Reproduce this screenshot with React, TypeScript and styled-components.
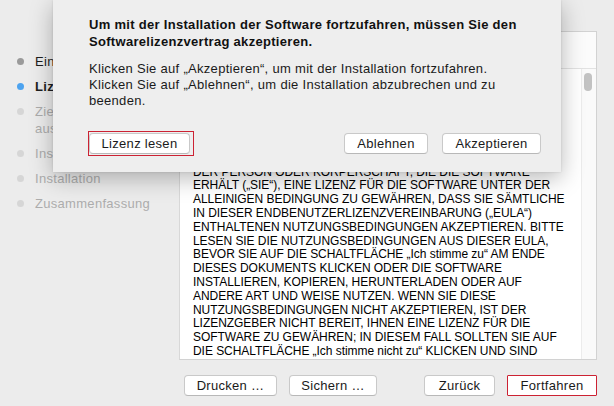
import React from "react";
import styled, { createGlobalStyle } from "styled-components";

const Global = createGlobalStyle`
  html, body { margin: 0; padding: 0; background: #ececec; }
  body { font-family: "Liberation Sans", Arial, sans-serif; }
`;

const Window = styled.div`
  position: relative;
  width: 614px;
  height: 406px;
  overflow: hidden;
  background: #ececec;
  display: grid;
  grid-template-columns: 179px 1fr;
`;

const Sidebar = styled.ul`
  list-style: none;
  margin: 0;
  padding: 53px 0 0 17px;
  display: flex;
  flex-direction: column;
  gap: 8px;
`;

const Step = styled.li<{ $state: "done" | "current" | "todo" }>`
  display: grid;
  grid-template-columns: 18px 1fr;
  align-items: start;
  font-size: 13px;
  letter-spacing: 0.3px;
  line-height: 17px;
  font-weight: ${(p) => (p.$state === "current" ? 700 : 400)};
  color: ${(p) => (p.$state === "todo" ? "#acacac" : "#1d1d1d")};
  &::before {
    content: "";
    width: 7px;
    height: 7px;
    border-radius: 50%;
    margin-top: 5px;
    background: ${(p) =>
      p.$state === "current" ? "#4da3ef" : p.$state === "done" ? "#9a9a9a" : "#d6d6d6"};
  }
`;

const Main = styled.div`
  padding: 31px 17px 0 0;
  display: flex;
  flex-direction: column;
`;

const Panel = styled.div`
  height: 329px;
  background: #fff;
  border: 1px solid #d2d2d2;
  border-left-color: #d8d8d8;
  box-sizing: border-box;
  display: flex;
  flex-direction: column;
`;

const PanelHeader = styled.div`
  height: 36px;
  flex: none;
  background: #fbfbfb;
  border-bottom: 1px solid #e2e2e2;
`;

const PanelBody = styled.div`
  flex: 1;
  display: grid;
  grid-template-columns: 1fr 15px;
  overflow: hidden;
`;

const LicenseText = styled.div`
  padding: 0 0 0 13px;
  font-size: 12px;
  letter-spacing: -0.05px;
  line-height: 13.8px;
  color: #000;
  white-space: nowrap;
  overflow: hidden;
`;

const ScrollTrack = styled.div`
  background: #fafafa;
  border-left: 1px solid #ececec;
  padding: 4px 0 0 2px;
`;

const ScrollThumb = styled.div`
  width: 8px;
  height: 18px;
  border-radius: 4px;
  background: #c2c2c2;
`;

const ButtonRow = styled.div`
  display: flex;
  align-items: center;
  padding: 15px 0 0 5px;
  gap: 12px;
`;

const Spacer = styled.div`
  flex: 1;
`;

const Button = styled.button<{ $w: number; $highlight?: boolean }>`
  width: ${(p) => p.$w}px;
  height: 21px;
  padding: 0;
  box-sizing: border-box;
  background: #fff;
  border: 1px solid ${(p) => (p.$highlight ? "#cc2233" : "#c9c9c9")};
  border-bottom-color: ${(p) => (p.$highlight ? "#cc2233" : "#b8b8b8")};
  border-radius: ${(p) => (p.$highlight ? "1px" : "4px")};
  font-family: "Liberation Sans", Arial, sans-serif;
  font-size: 13px;
  letter-spacing: 0.3px;
  color: #1a1a1a;
  line-height: 19px;
`;

const Sheet = styled.div`
  position: absolute;
  left: 53px;
  top: 0;
  width: 508px;
  height: 172px;
  box-sizing: border-box;
  background: #eeeeee;
  box-shadow: 0 6px 22px rgba(0, 0, 0, 0.28), 0 0 2px rgba(0, 0, 0, 0.12);
  padding: 16px 20px 0 36px;
  display: flex;
  flex-direction: column;
  letter-spacing: 0.3px;
`;

const SheetTitle = styled.div`
  font-weight: 700;
  font-size: 13px;
  line-height: 17px;
  color: #111;
`;

const SheetBody = styled.div`
  margin-top: 11px;
  font-size: 13px;
  line-height: 16px;
  color: #1a1a1a;
`;

const SheetButtons = styled.div`
  margin-top: auto;
  margin-bottom: 17px;
  display: flex;
  align-items: center;
  gap: 14px;
`;

const Highlight = styled.div`
  border: 1.5px solid #cc2233;
  padding: 1px 3px 1px 0;
  margin: -1px 0 -1px -1px;
  line-height: 0;
`;

const hidden = [
  "WICHTIG – BITTE SORGFÄLTIG LESEN: DIESE",
  "ENDBENUTZERLIZENZVEREINBARUNG IST EIN",
  "RECHTLICH BINDENDER VERTRAG ZWISCHEN IHNEN",
  "(ALS NATÜRLICHE ODER JURISTISCHE PERSON)",
  "UND DEM LIZENZGEBER. DIE SOFTWARE WIRD",
  "NUR LIZENZIERT UND NICHT VERKAUFT. DER",
  "LIZENZGEBER IST NUR DANN BEREIT, DER",
];

const visible = [
  "DER PERSON ODER KÖRPERSCHAFT, DIE DIE SOFTWARE",
  "ERHÄLT („SIE“), EINE LIZENZ FÜR DIE SOFTWARE UNTER DER",
  "ALLEINIGEN BEDINGUNG ZU GEWÄHREN, DASS SIE SÄMTLICHE",
  "IN DIESER ENDBENUTZERLIZENZVEREINBARUNG („EULA“)",
  "ENTHALTENEN NUTZUNGSBEDINGUNGEN AKZEPTIEREN. BITTE",
  "LESEN SIE DIE NUTZUNGSBEDINGUNGEN AUS DIESER EULA,",
  "BEVOR SIE AUF DIE SCHALTFLÄCHE „Ich stimme zu“ AM ENDE",
  "DIESES DOKUMENTS KLICKEN ODER DIE SOFTWARE",
  "INSTALLIEREN, KOPIEREN, HERUNTERLADEN ODER AUF",
  "ANDERE ART UND WEISE NUTZEN. WENN SIE DIESE",
  "NUTZUNGSBEDINGUNGEN NICHT AKZEPTIEREN, IST DER",
  "LIZENZGEBER NICHT BEREIT, IHNEN EINE LIZENZ FÜR DIE",
  "SOFTWARE ZU GEWÄHREN; IN DIESEM FALL SOLLTEN SIE AUF",
  "DIE SCHALTFLÄCHE „Ich stimme nicht zu“ KLICKEN UND SIND",
];

export default function App() {
  const lines = [...hidden, ...visible];
  return (
    <>
      <Global />
      <Window>
        <Sidebar>
          <Step $state="done">Einführung</Step>
          <Step $state="current">Lizenz</Step>
          <Step $state="todo">
            <span>
              Zielvolume
              <br />
              auswählen
            </span>
          </Step>
          <Step $state="todo">Installationstyp</Step>
          <Step $state="todo">Installation</Step>
          <Step $state="todo">Zusammenfassung</Step>
        </Sidebar>
        <Main>
          <Panel>
            <PanelHeader />
            <PanelBody>
              <LicenseText>
                {lines.map((l, i) => (
                  <React.Fragment key={i}>
                    {l}
                    <br />
                  </React.Fragment>
                ))}
              </LicenseText>
              <ScrollTrack>
                <ScrollThumb />
              </ScrollTrack>
            </PanelBody>
          </Panel>
          <ButtonRow>
            <Button $w={93}>Drucken …</Button>
            <Button $w={88}>Sichern …</Button>
            <Spacer />
            <Button $w={71}>Zurück</Button>
            <Button $w={90} $highlight>
              Fortfahren
            </Button>
          </ButtonRow>
        </Main>
        <Sheet>
          <SheetTitle>
            Um mit der Installation der Software fortzufahren, müssen Sie den
            <br />
            Softwarelizenzvertrag akzeptieren.
          </SheetTitle>
          <SheetBody>
            Klicken Sie auf „Akzeptieren“, um mit der Installation fortzufahren.
            <br />
            Klicken Sie auf „Ablehnen“, um die Installation abzubrechen und zu
            <br />
            beenden.
          </SheetBody>
          <SheetButtons>
            <Highlight>
              <Button $w={101}>Lizenz lesen</Button>
            </Highlight>
            <Spacer />
            <Button $w={84}>Ablehnen</Button>
            <Button $w={99}>Akzeptieren</Button>
          </SheetButtons>
        </Sheet>
      </Window>
    </>
  );
}
